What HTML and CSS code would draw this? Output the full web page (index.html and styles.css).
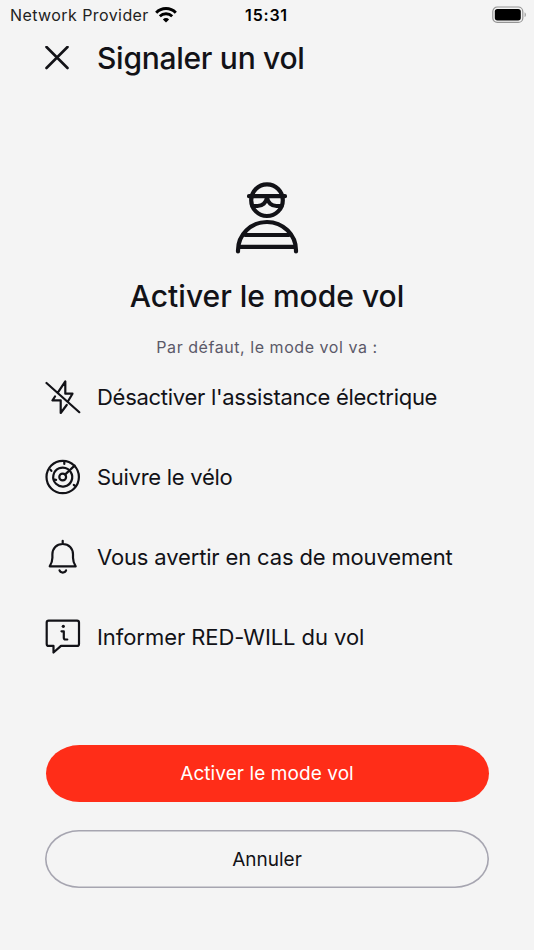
FILE: index.html
```html
<!DOCTYPE html>
<html lang="fr">
<head>
    <meta charset="UTF-8">
    <meta name="viewport" content="width=device-width, initial-scale=1.0">
    <title>Signaler un vol</title>
    <link rel="stylesheet" href="styles.css">
</head>
<body>
    <div class="status-bar">
        <div class="carrier">
            <span class="carrier-name">Network Provider</span>
            <svg class="wifi" width="22" height="16" viewBox="0 0 22 16" fill="none" stroke="#000">
                <path d="M1.2 5.7a13.8 13.8 0 0 1 19.6 0" stroke-width="3"/>
                <path d="M4.8 9.3a8.8 8.8 0 0 1 12.4 0" stroke-width="2.8"/>
                <path d="M11 15.6l-3.1-3.2a4.4 4.4 0 0 1 6.2 0z" fill="#000" stroke="none"/>
            </svg>
        </div>
        <span class="time">15:31</span>
        <svg class="battery" width="34" height="18" viewBox="0 0 34 18">
            <rect x="0.8" y="1" width="30" height="15.4" rx="4.5" fill="none" stroke="#949494" stroke-width="1.2"/>
            <rect x="2.8" y="3" width="26" height="11.4" rx="2.6"/>
            <path d="M32.6 6.3c1.6.8 1.6 4 0 4.8z" fill="#949494"/>
        </svg>
    </div>

    <header class="header">
        <svg class="close" width="24" height="24" viewBox="0 0 24 24">
            <path d="M1.5 1l21 21M22.5 1l-21 21"/>
        </svg>
        <h1 class="title">Signaler un vol</h1>
    </header>

    <main class="content">
        <svg class="thief" width="94" height="94" viewBox="0 0 94 94">
            <circle cx="47" cy="30.2" r="15.8"/>
            <path d="M29 26.2h36M32.5 36h5c5 0 8.500-3.500 9.500-8 1 4.500 4.500 8 9.500 8h5"/>
            <path d="M18 81.5v-1a29 28.5 0 0 1 58 0v1M25 65h44M19 76.8h56"/>
        </svg>
        <h2 class="subtitle">Activer le mode vol</h2>
        <p class="intro">Par défaut, le mode vol va :</p>

        <ul class="features">
            <li class="feature">
                <svg class="icon" width="36" height="36" viewBox="0 0 36 36">
                    <path d="M1.5 4l32.8 29.2M13 13.3l7.3-11v12.4h7.2l-4.2 7M10 17.5l-2.5 3.8h8.2V34l6-8"/>
                </svg>
                <span class="label label-assist">Désactiver l'assistance électrique</span>
            </li>
            <li class="feature">
                <svg class="icon" width="36" height="36" viewBox="0 0 36 36">
                    <circle cx="17.7" cy="18" r="16.2"/>
                    <path d="M23 10.2a9.500 9.500 0 1 0 2.600 2.600M20 15.6l9.600-9"/>
                    <circle cx="17.7" cy="18" r="3.400"/>
                    <path d="M19.300 3v2M5.400 10.700l1 1.200M9.500 20.700l1.600.2M28.800 26l1 .7"/>
                </svg>
                <span class="label label-track">Suivre le vélo</span>
            </li>
            <li class="feature">
                <svg class="icon" width="36" height="36" viewBox="0 0 36 36">
                    <path d="M17.700 1.800v3M4.700 27.300c2-3 2.700-5 2.700-8.500v-3.500c0-6 4-10.300 10.300-10.300s10.300 4.300 10.300 10.300v3.500c0 3.500.7 5.500 2.700 8.500zM14.500 31.300c.8 3 5.800 3 6.600 0"/>
                </svg>
                <span class="label label-alert">Vous avertir en cas de mouvement</span>
            </li>
            <li class="feature">
                <svg class="icon" width="36" height="36" viewBox="0 0 36 36">
                    <path d="M3.700 1.600H32q2 0 2 2v21.300q0 2-2 2H16l-7.500 6.600v-6.600H3.700q-2 0-2-2V3.600q0-2 2-2zM16.500 12.300h2.300v6.500q0 1.700 1.700 1.700h1.800"/>
                    <circle class="dot" cx="18.300" cy="7.300" r="1.600"/>
                </svg>
                <span class="label label-inform">Informer RED-WILL du vol</span>
            </li>
        </ul>
    </main>

    <div class="actions">
        <button type="button" class="btn primary">Activer le mode vol</button>
        <button type="button" class="btn secondary">Annuler</button>
    </div>
</body>
</html>
```

FILE: styles.css
```css
* {
    box-sizing: border-box;
}

body {
    display: flex;
    flex-direction: column;
    height: 950px;
    margin: 0;
    background-color: #f4f4f4;
    color: #121217;
    font-family: Inter, sans-serif;
    overflow: hidden;
}

svg {
    display: block;
    flex: none;
}

.status-bar {
    display: grid;
    grid-template-columns: 1fr auto 1fr;
    align-items: center;
    height: 30px;
    padding: 0 8px 0 10px;
    color: #000;
    font-size: 16px;
}

.carrier {
    display: flex;
    align-items: center;
    gap: 6px;
}

.carrier-name {
    color: #222;
    letter-spacing: 0.42px;
    white-space: nowrap;
}

.time {
    margin-right: 3px;
    font-weight: 600;
    letter-spacing: 0.8px;
}

.battery {
    justify-self: end;
}

.header {
    display: flex;
    align-items: center;
    gap: 28px;
    height: 56px;
    padding-left: 45px;
}

.close {
    fill: none;
    stroke: #121217;
    stroke-width: 2.6;
    stroke-linecap: round;
}

.title,
.subtitle {
    margin: 0;
    font-size: 30px;
    font-weight: 500;
    line-height: 40px;
}

.title {
    letter-spacing: -0.28px;
}

.content {
    display: flex;
    flex-direction: column;
    align-items: center;
    padding-top: 84px;
}

.thief {
    fill: none;
    stroke: #121217;
    stroke-width: 4.2;
    stroke-linecap: round;
    stroke-linejoin: round;
}

.subtitle {
    margin-top: 12px;
}

.intro {
    margin: 19px 0 0;
    color: #5b5968;
    font-size: 16px;
    line-height: 24px;
    letter-spacing: 0.55px;
}

.features {
    display: flex;
    flex-direction: column;
    gap: 44px;
    width: 100%;
    margin: 20px 0 0;
    padding: 0 45px;
    list-style: none;
}

.feature {
    display: flex;
    align-items: center;
    gap: 16px;
    height: 36px;
    font-size: 22px;
    white-space: nowrap;
}

.label-assist,
.label-track {
    letter-spacing: -0.28px;
}

.label-alert {
    letter-spacing: -0.15px;
}

.label-inform {
    letter-spacing: -0.06px;
}

.icon {
    fill: none;
    stroke: #121217;
    stroke-width: 2.2;
    stroke-linecap: round;
    stroke-linejoin: round;
}

.dot {
    fill: #121217;
    stroke: none;
}

.actions {
    display: flex;
    flex-direction: column;
    gap: 28px;
    margin-top: auto;
    padding: 0 45px 62px;
}

.btn {
    height: 58px;
    border: none;
    border-radius: 34px / 29px;
    font-family: inherit;
    font-size: 19px;
}

.primary {
    height: 57px;
    margin: 0 0.5px;
    background-color: #ff2d18;
    color: #fff;
    letter-spacing: 0.08px;
}

.secondary {
    box-shadow: inset 0 0 0 1.6px #a6a5b0;
    background-color: transparent;
    color: #121217;
}
```
